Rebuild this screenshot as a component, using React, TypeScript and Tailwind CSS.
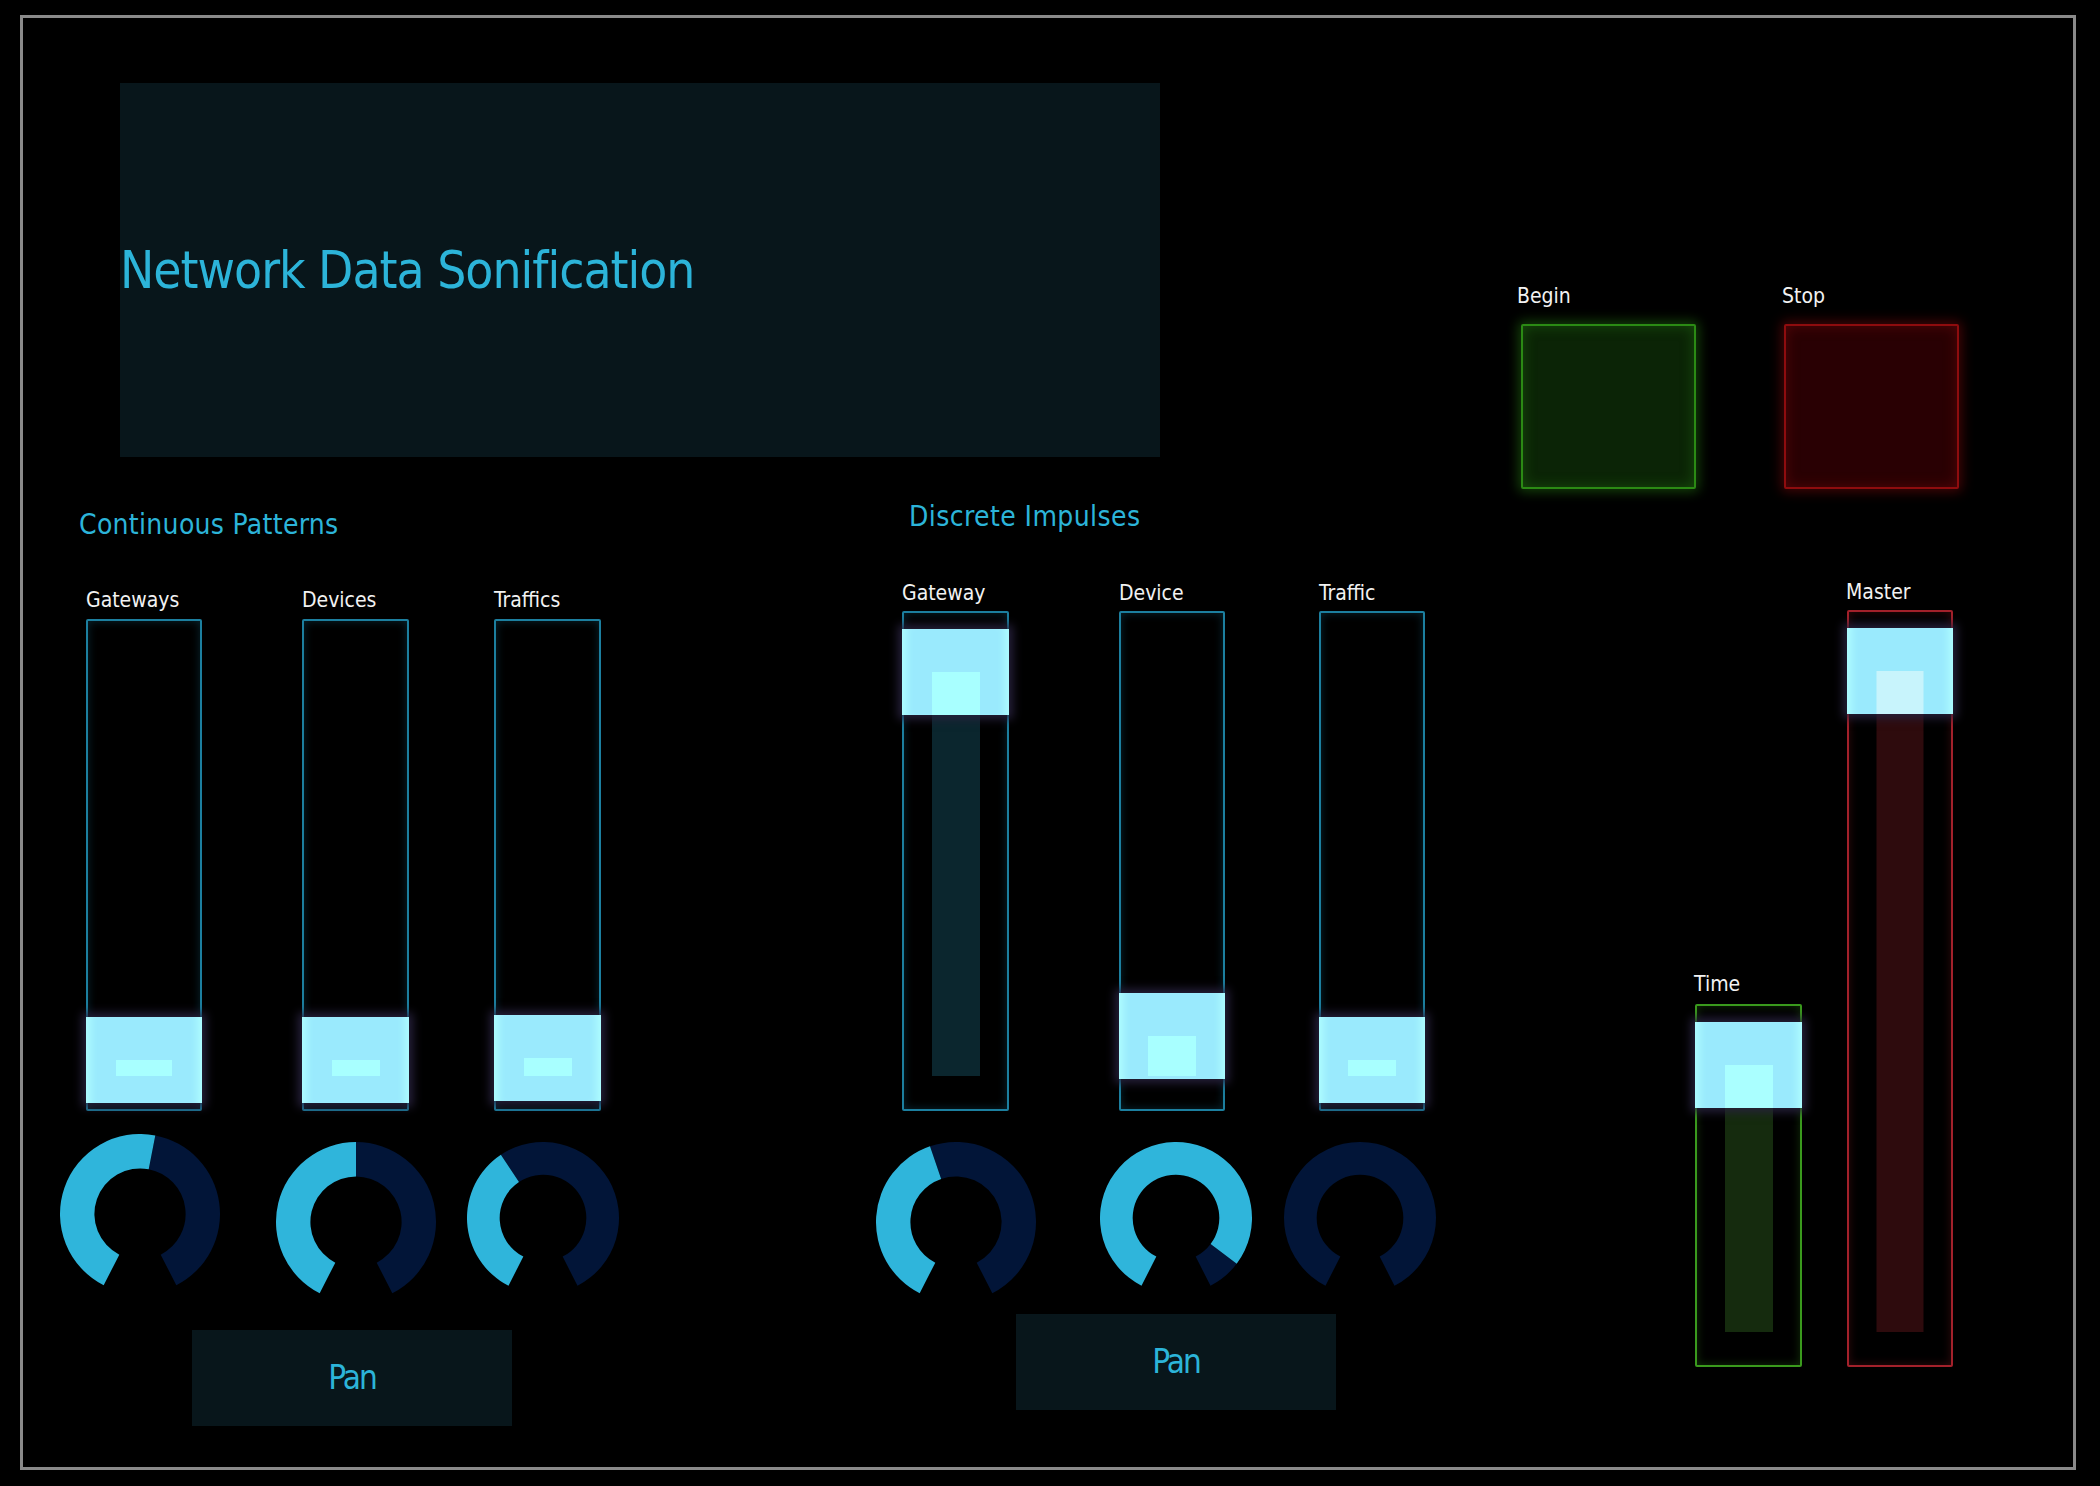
import React from "react";

type Tone = "cyan" | "green" | "red";

const tones: Record<Tone, { box: string; bar: string; hot: string }> = {
  cyan: {
    box: "border-[#1c7f9f] shadow-[inset_0_0_10px_rgba(28,127,159,0.3)]",
    bar: "bg-[#0b262e]",
    hot: "bg-[#a8ffff]",
  },
  green: {
    box: "border-[#3a9a1d] shadow-[inset_0_0_10px_rgba(58,154,29,0.3)]",
    bar: "bg-[#152b0e]",
    hot: "bg-[#aaffff]",
  },
  red: {
    box: "border-[#a3212b] shadow-[inset_0_0_10px_rgba(163,33,43,0.3)]",
    bar: "bg-[#2e0b0d]",
    hot: "bg-[#c8f4fc]",
  },
};

const labelFont = "font-['DejaVu_Sans_Condensed','DejaVu_Sans',sans-serif]";

interface SliderProps {
  label: string;
  box: string;
  h: number;
  barW: number;
  value: number;
  tone?: Tone;
  gap: string;
}

const Slider: React.FC<SliderProps> = ({ label, box, h, barW, value, tone = "cyan", gap }) => {
  const t = tones[tone];
  const top = 18 + (1 - value) * (h - 112);
  const barTop = top + 43;
  const barBottom = h - 35;
  const hotBottom = Math.min(top + 86, barBottom);
  return (
    <div className="flex flex-col">
      <span className={`${labelFont} text-[21px] leading-[24px] h-[24px] text-[#f2f2f2] whitespace-nowrap`}>
        {label}
      </span>
      <div className={`relative rounded-[2px] border-2 ${gap} ${box} ${t.box}`}>
        <div
          className={`absolute left-1/2 -translate-x-1/2 ${t.bar}`}
          style={{ top: barTop - 2, height: barBottom - barTop, width: barW }}
        />
        <div
          className="absolute -left-[2px] -right-[2px] h-[86px] bg-[#9aeafd] shadow-[0_0_9px_4px_rgba(40,34,62,0.95),inset_10px_0_8px_-6px_#b0ffff,inset_-10px_0_8px_-6px_#b0ffff]"
          style={{ top: top - 2 }}
        />
        <div
          className={`absolute left-1/2 -translate-x-1/2 ${t.hot}`}
          style={{ top: barTop - 2, height: hotBottom - barTop, width: barW }}
        />
      </div>
    </div>
  );
};

const pt = (cx: number, cy: number, r: number, deg: number) => {
  const a = (deg * Math.PI) / 180;
  return [cx + r * Math.sin(a), cy - r * Math.cos(a)];
};

const sector = (cx: number, cy: number, R: number, r: number, a0: number, a1: number) => {
  if (a1 - a0 < 0.05) return "";
  const large = a1 - a0 > 180 ? 1 : 0;
  const [x0, y0] = pt(cx, cy, R, a0);
  const [x1, y1] = pt(cx, cy, R, a1);
  const [x2, y2] = pt(cx, cy, r, a1);
  const [x3, y3] = pt(cx, cy, r, a0);
  return `M${x0} ${y0} A${R} ${R} 0 ${large} 1 ${x1} ${y1} L${x2} ${y2} A${r} ${r} 0 ${large} 0 ${x3} ${y3}Z`;
};

const Knob: React.FC<{ r: number; value: number; className: string }> = ({ r, value, className }) => {
  const ri = r * 0.57;
  const start = -153;
  const end = 153;
  const mid = start + (end - start) * value;
  return (
    <svg width={r * 2} height={r * 2} viewBox={`0 0 ${r * 2} ${r * 2}`} className={`shrink-0 ${className}`}>
      <path d={sector(r, r, r, ri, mid, end)} fill="#021538" />
      <path d={sector(r, r, r, ri, start, mid)} fill="#2fb5db" />
    </svg>
  );
};

const PanButton: React.FC<{ className: string }> = ({ className }) => (
  <button
    className={`flex items-center justify-center w-[320px] h-[96px] bg-[#08161b] text-[#2cb4d9] text-[33px] tracking-[-2px] ${labelFont} ${className}`}
  >
    Pan
  </button>
);

const App: React.FC = () => {
  return (
    <div className="w-full h-[1486px] bg-black overflow-hidden">
      <div className="ml-[20px] mt-[15px] w-[2056px] h-[1455px] border-[3px] border-[#8a8a8a] flex flex-col">
        {/* header */}
        <div className="flex items-start h-[478px] shrink-0">
          <div className="ml-[97px] mt-[65px] w-[1040px] h-[374px] bg-[#08161b] flex items-center">
            <h1 className={`${labelFont} text-[51px] leading-[51px] tracking-[-1px] text-[#2cb4d9]`}>
              Network Data Sonification
            </h1>
          </div>

          <div className="ml-[357px] mt-[266px] flex">
            <div className="flex flex-col">
              <span className={`${labelFont} text-[21px] leading-[24px] h-[24px] text-[#f2f2f2]`}>Begin</span>
              <button className="ml-[4px] mt-[16px] w-[175px] h-[165px] rounded-[2px] border-2 border-[#2b8a14] bg-[#0b2406] shadow-[0_0_12px_3px_rgba(43,138,20,0.45),inset_0_0_14px_rgba(43,138,20,0.4)]" />
            </div>
            <div className="ml-[86px] flex flex-col">
              <span className={`${labelFont} text-[21px] leading-[24px] h-[24px] text-[#f2f2f2]`}>Stop</span>
              <button className="ml-[2px] mt-[16px] w-[175px] h-[165px] rounded-[2px] border-2 border-[#8e0c0e] bg-[#290003] shadow-[0_0_12px_3px_rgba(142,12,14,0.45),inset_0_0_14px_rgba(142,12,14,0.4)]" />
            </div>
          </div>
        </div>

        {/* controls */}
        <div className="flex items-start">
          {/* continuous */}
          <section className="ml-[37px] mt-[13px] w-[816px] shrink-0 flex flex-col">
            <h2 className={`ml-[19px] ${labelFont} text-[28px] leading-[32px] h-[32px] tracking-[0.3px] text-[#2cb4d9]`}>
              Continuous Patterns
            </h2>
            <div className="ml-[26px] mt-[47px] flex">
              <div className="w-[116px]">
                <Slider label="Gateways" box="w-[116px] h-[492px]" h={492} barW={56} value={0} gap="mt-[7px]" />
              </div>
              <div className="ml-[100px] w-[107px]">
                <Slider label="Devices" box="w-[107px] h-[492px]" h={492} barW={48} value={0} gap="mt-[7px]" />
              </div>
              <div className="ml-[85px] w-[107px]">
                <Slider label="Traffics" box="w-[107px] h-[492px]" h={492} barW={48} value={0.005} gap="mt-[7px]" />
              </div>
            </div>
            <div className="flex items-start">
              <Knob r={80} value={0.536} className="mt-[23px]" />
              <Knob r={80} value={0.5} className="ml-[56px] mt-[31px]" />
              <Knob r={76} value={0.39} className="ml-[31px] mt-[31px]" />
            </div>
            <PanButton className="ml-[132px] mt-[28px]" />
          </section>

          {/* discrete */}
          <section className="mt-[5px] w-[818px] shrink-0 flex flex-col">
            <h2 className={`ml-[33px] ${labelFont} text-[28px] leading-[32px] h-[32px] tracking-[0.4px] text-[#2cb4d9]`}>
              Discrete Impulses
            </h2>
            <div className="ml-[26px] mt-[48px] flex">
              <div className="w-[107px]">
                <Slider label="Gateway" box="w-[107px] h-[500px]" h={500} barW={48} value={1} gap="mt-[6px]" />
              </div>
              <div className="ml-[110px] w-[106px]">
                <Slider label="Device" box="w-[106px] h-[500px]" h={500} barW={48} value={0.062} gap="mt-[6px]" />
              </div>
              <div className="ml-[94px] w-[106px]">
                <Slider label="Traffic" box="w-[106px] h-[500px]" h={500} barW={48} value={0} gap="mt-[6px]" />
              </div>
            </div>
            <div className="flex items-start">
              <Knob r={80} value={0.438} className="mt-[31px]" />
              <Knob r={76} value={0.915} className="ml-[64px] mt-[31px]" />
              <Knob r={76} value={0} className="ml-[32px] mt-[31px]" />
            </div>
            <PanButton className="ml-[140px] mt-[12px]" />
          </section>

          {/* master */}
          <section className="mt-[84px] flex items-end">
            <div className="w-[108px]">
              <Slider label="Time" box="ml-[1px] w-[107px] h-[363px]" h={363} barW={48} value={1} tone="green" gap="mt-[8px]" />
            </div>
            <div className="ml-[44px] w-[107px]">
              <Slider label="Master" box="ml-[1px] w-[106px] h-[757px]" h={757} barW={47} value={1} tone="red" gap="mt-[6px]" />
            </div>
          </section>
        </div>
      </div>
    </div>
  );
};

export default App;
